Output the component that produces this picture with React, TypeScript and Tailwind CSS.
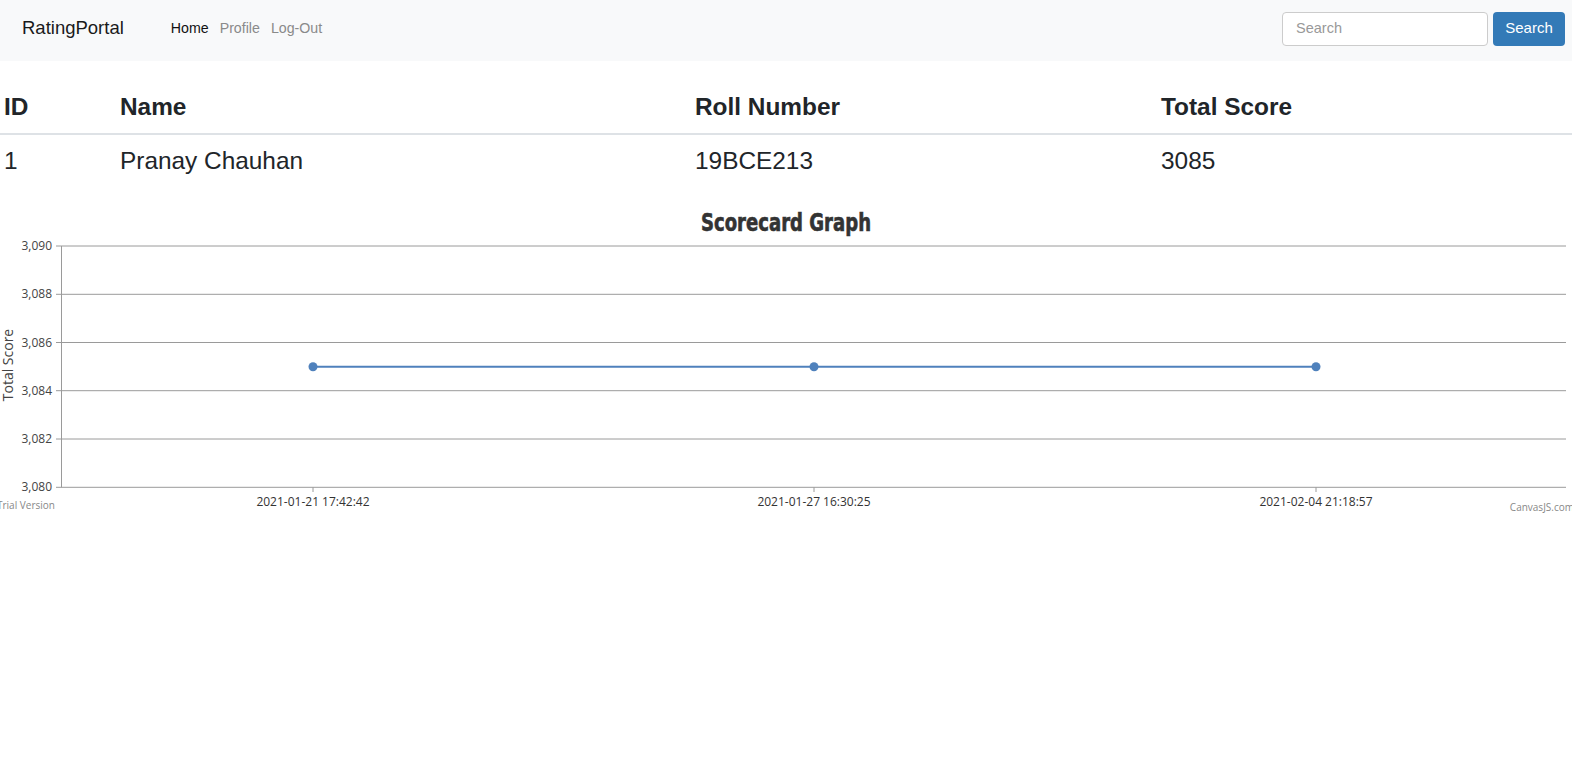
import React from "react";

const sans = { fontFamily: '"Liberation Sans", Arial, sans-serif' };

function Chart() {
  const grid = [
    { y: 46, label: "3,090" },
    { y: 94.3, label: "3,088" },
    { y: 142.5, label: "3,086" },
    { y: 190.7, label: "3,084" },
    { y: 239, label: "3,082" },
    { y: 287.3, label: "3,080" },
  ];
  const pts = [
    { x: 313, label: "2021-01-21 17:42:42" },
    { x: 814, label: "2021-01-27 16:30:25" },
    { x: 1316, label: "2021-02-04 21:18:57" },
  ];
  const dy = 166.7;
  const lbl = '"Open Sans", "DejaVu Sans", sans-serif';
  return (
    <svg width="1572" height="320" viewBox="0 0 1572 320" className="block">
      <text
        x="701"
        y="31"
        textLength="170"
        lengthAdjust="spacingAndGlyphs"
        fontFamily='Impact, "DejaVu Sans Condensed", "DejaVu Sans", sans-serif'
        fontWeight="900"
        fontSize="24"
        fill="#333"
        stroke="#333"
        strokeWidth="0.6"
      >
        Scorecard Graph
      </text>
      {grid.map((g) => (
        <g key={g.label}>
          <line x1="56" x2="1566" y1={g.y} y2={g.y} stroke="#9a9a9a" strokeWidth="1" />
          <text x="52" y={g.y + 4} textAnchor="end" fontFamily={lbl} fontSize="12" fill="#444">
            {g.label}
          </text>
        </g>
      ))}
      <line x1="61.5" x2="61.5" y1="46" y2="287.3" stroke="#9a9a9a" strokeWidth="1" />
      <text
        transform="translate(13 165) rotate(-90)"
        textAnchor="middle"
        fontFamily={lbl}
        fontSize="14"
        fill="#444"
      >
        Total Score
      </text>
      {pts.map((p) => (
        <g key={p.label}>
          <line x1={p.x} x2={p.x} y1="287.3" y2="292" stroke="#9a9a9a" strokeWidth="1" />
          <text x={p.x} y="306" textAnchor="middle" fontFamily={lbl} fontSize="12" fill="#333">
            {p.label}
          </text>
        </g>
      ))}
      <polyline
        points={pts.map((p) => `${p.x},${dy}`).join(" ")}
        fill="none"
        stroke="#4f81bc"
        strokeWidth="2"
      />
      {pts.map((p) => (
        <circle key={p.x} cx={p.x} cy={dy} r="4.5" fill="#4f81bc" />
      ))}
      <text x="-3" y="309" fontFamily={lbl} fontSize="10" fill="#888">
        Trial Version
      </text>
      <text x="1574" y="311" textAnchor="end" fontFamily={lbl} fontSize="10" fill="#888">
        CanvasJS.com
      </text>
    </svg>
  );
}

export default function App() {
  return (
    <div className="w-[1572px] min-h-[772px] bg-white text-[#212529]" style={sans}>
      <nav className="h-[61px] bg-[#f8f9fa] flex items-center pl-[22px] pr-[7px] pb-[4px]">
        <span className="text-[18.5px] text-[#1a1a1a] leading-none">RatingPortal</span>
        <div className="flex items-center gap-[11px] ml-[47px] text-[14.2px] leading-none">
          <span className="text-[#111]">Home</span>
          <span className="text-[#8a8a8a]">Profile</span>
          <span className="text-[#8a8a8a]">Log-Out</span>
        </div>
        <div className="ml-auto flex items-center gap-[5px]">
          <div className="w-[206px] h-[34px] rounded-[4px] border border-[#cccccc] bg-white flex items-center px-[13px] text-[14.5px] text-[#999]">
            Search
          </div>
          <div className="w-[72px] h-[34px] rounded-[4px] bg-[#337ab7] flex items-center justify-center text-[15px] text-white">
            Search
          </div>
        </div>
      </nav>
      <div className="mt-[21px]">
        <div className="grid grid-cols-[116px_575px_466px_1fr] h-[53px] items-center border-b-2 border-[#dee2e6] text-[24.4px] font-bold leading-none">
          <div className="pl-[4px]">ID</div>
          <div className="pl-[4px]">Name</div>
          <div className="pl-[4px]">Roll Number</div>
          <div className="pl-[4px]">Total Score</div>
        </div>
        <div className="grid grid-cols-[116px_575px_466px_1fr] h-[52px] items-center text-[24.4px] leading-none">
          <div className="pl-[4px]">1</div>
          <div className="pl-[4px]">Pranay Chauhan</div>
          <div className="pl-[4px]">19BCE213</div>
          <div className="pl-[4px]">3085</div>
        </div>
      </div>
      <div className="mt-[13px]">
        <Chart />
      </div>
    </div>
  );
}
